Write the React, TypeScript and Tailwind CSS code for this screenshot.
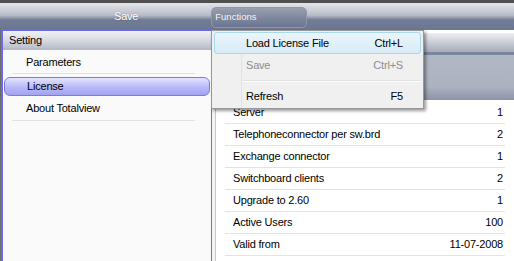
import React from 'react';

const rows: [string, string][] = [
  ['Server', '1'],
  ['Telephoneconnector per sw.brd', '2'],
  ['Exchange connector', '1'],
  ['Switchboard clients', '2'],
  ['Upgrade to 2.60', '1'],
  ['Active Users', '100'],
  ['Valid from', '11-07-2008'],
];

function FunctionsMenu() {
  return (
    <div className="absolute left-[211px] top-[30px] w-[213px] h-[79px] bg-[#f0f0f0] border border-[#979797] shadow-[2px_2px_3px_rgba(0,0,0,0.4)]">
      {/* icon column divider */}
      <div className="absolute left-[29px] top-[1px] bottom-[1px] w-[2px] border-l border-[#e2e3e3]" />
      <div className="relative flex flex-col pt-[1px] px-[2px]">
        <div className="flex items-center h-[22px] rounded-[3px] border border-[#a8d8eb] bg-[linear-gradient(to_bottom,#ecf5fb,#d8ebf6)]">
          <span className="pl-[31px] w-[154px]">Load License File</span>
          <span className="flex-1 text-right pr-[17px]">Ctrl+L</span>
        </div>
        <div className="flex items-center h-[22px] text-[#8d8d8d]">
          <span className="pl-[32px] w-[155px]">Save</span>
          <span className="flex-1 text-right pr-[18px]">Ctrl+S</span>
        </div>
        <div className="h-[9px] flex items-center pl-[28px]">
          <div className="h-[2px] w-full border-t border-[#e0e0e0] border-b border-b-white" />
        </div>
        <div className="flex items-center h-[22px]">
          <span className="pl-[32px] w-[155px]">Refresh</span>
          <span className="flex-1 text-right pr-[18px]">F5</span>
        </div>
      </div>
    </div>
  );
}

export default function App() {
  return (
    <div className="relative w-[514px] h-[261px] overflow-hidden bg-[#f4f4f4] font-['Liberation_Sans',Arial,sans-serif] text-[11px] tracking-[-0.2px] text-black">
      <div className="h-[3px] bg-[#4f4f4f]" />
      {/* toolbar */}
      <div className="h-[27px] flex items-center bg-[linear-gradient(to_bottom,#e4e5ea,#b9bdc8_45%,#9096a8_56%,#717c96_62%,#6b7792)]">
        <span className="ml-[114px] text-white [text-shadow:0_0_2px_rgba(0,0,0,0.3)]">Save</span>
        <div className="ml-[73px] mt-[2px] w-[96px] h-[21px] rounded-[5px] border border-[#8e96a8] bg-[linear-gradient(to_bottom,#9aa0b0,#7f889e_50%,#6a7590)] flex items-center pl-[3px] text-[9.5px] font-medium text-[#f4f4f8] tracking-normal">
          Functions
        </div>
      </div>

      <div className="flex h-[231px]">
        {/* left navigation */}
        <div className="w-[212px] border-l border-[#6b6b6b]">
          <div className="h-full border-l-2 border-t border-r border-[#6a6af0] bg-[#fafafa]">
            <div className="h-[19px] flex items-center pl-[6px] bg-[linear-gradient(to_bottom,#f2f3f5,#d6d9e0_50%,#b4b8c6)]">
              Setting
            </div>
            <div className="px-[8px]">
              <div className="h-[22px] flex items-center pl-[15px] mt-[1px]">Parameters</div>
              <div className="h-px bg-[#e2e2e2] ml-[1px] mr-[8px]" />
            </div>
            <div className="mx-[1px] mt-[3px] h-[19px] flex items-center pl-[22px] rounded-[6px] border border-[#7a7ae6] bg-[linear-gradient(to_bottom,#e4e4ff,#b8b8fa_55%,#a2a2f2)]">
              License
            </div>
            <div className="px-[8px]">
              <div className="h-[24px] flex items-center pl-[15px]">About Totalview</div>
              <div className="h-px bg-[#e2e2e2] ml-[1px] mr-[8px]" />
            </div>
          </div>
        </div>

        {/* right content */}
        <div className="flex-1 ml-[3px] border-l border-[#c8c8c8] bg-white">
          <div className="h-[3px] bg-white" />
          <div className="h-[19px] bg-[linear-gradient(to_bottom,#eceef2,#c6cad4_55%,#a6abba)]" />
          <div className="h-[3px] bg-[#7b859b]" />
          <div className="h-[45px] bg-[linear-gradient(to_bottom,#b2b7c6,#adb2c1_70%,#8e94a7)]" />
          <div className="pl-[9px] pr-[9px] pt-[2px]">
            {rows.map(([k, v]) => (
              <div key={k} className="h-[22px] flex items-center justify-between pl-[8px] pr-[2px] border-b border-[#e3e3e3]">
                <span>{k}</span>
                <span>{v}</span>
              </div>
            ))}
          </div>
        </div>
      </div>

      <FunctionsMenu />
    </div>
  );
}
